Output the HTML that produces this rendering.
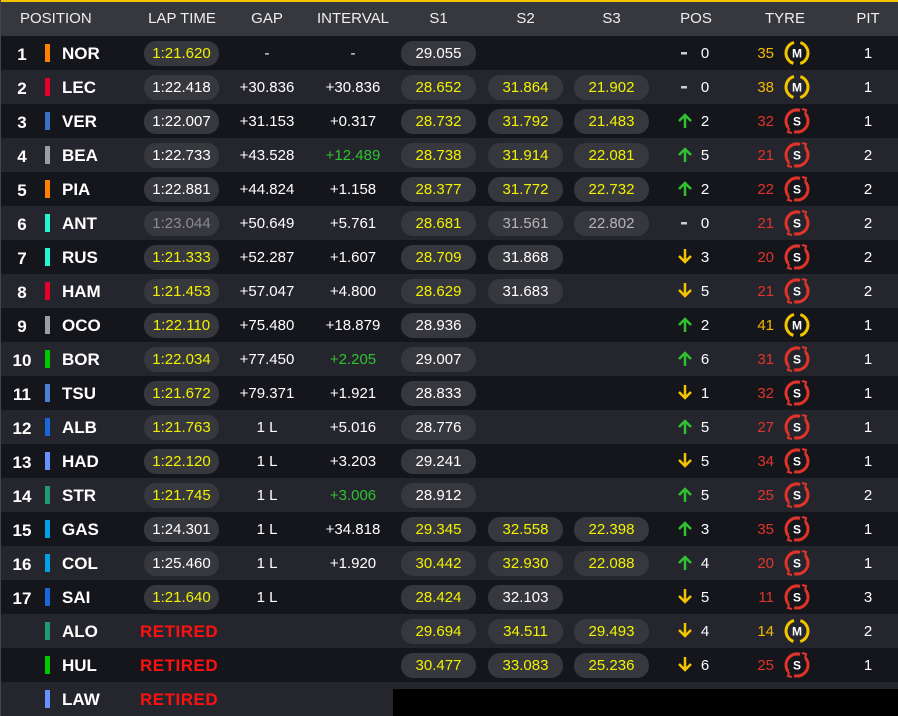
<!DOCTYPE html>
<html><head><meta charset="utf-8"><style>
*{margin:0;padding:0;box-sizing:border-box}
body{width:898px;height:716px;background:#15161c;font-family:"Liberation Sans",sans-serif;color:#fff;overflow:hidden;position:relative}
.top{position:absolute;left:0;top:0;width:898px;height:2px;background:#f5c400}
.hd{position:absolute;left:0;top:2px;width:898px;height:34px;background:#37383d;font-size:15px;color:#eee}
.hd span{position:absolute;top:8px;text-align:center}
.r{position:absolute;left:0;width:898px;height:34px;font-size:15px}
.o{background:#15161c}.e{background:#25262d}
.r>*{position:absolute}
.p{left:0;width:44px;text-align:center;top:9px;font-weight:bold;font-size:17px}
.b{left:45px;top:8px;width:5px;height:18px}
.n{left:62px;top:8px;font-weight:bold;font-size:17px}
.pl{top:5px;height:25px;width:75px;border-radius:12px;background:#37383e;text-align:center;line-height:25px}
.lt{left:144px}.s1{left:401px}.s2{left:488px}.s3{left:574px}
.g{left:222px;width:90px;text-align:center;top:9px}
.i{left:308px;width:90px;text-align:center;top:9px}
.ar{left:677px;top:8px}
.pn{left:698px;top:9px;width:14px;text-align:center}
.tn{left:740px;width:34px;text-align:right;top:9px}
.ti{left:783px;top:3px}
.pit{left:848px;width:40px;text-align:center;top:9px}
.y{color:#f2f200}.w{color:#fff}.gr{color:#b5b5b8}.gn{color:#2fc22f}
.ret{left:140px;top:8px;color:#ff1010;font-weight:bold;font-size:17px;letter-spacing:0.5px}
.tm{color:#f5b800}.ts{color:#e0342a}
</style></head><body>
<div class="top"></div>
<div class="hd">
<span style="left:20px">POSITION</span>
<span style="left:132px;width:100px">LAP TIME</span>
<span style="left:222px;width:90px">GAP</span>
<span style="left:308px;width:90px">INTERVAL</span>
<span style="left:401px;width:75px">S1</span>
<span style="left:488px;width:75px">S2</span>
<span style="left:574px;width:75px">S3</span>
<span style="left:666px;width:60px">POS</span>
<span style="left:750px;width:70px">TYRE</span>
<span style="left:848px;width:40px">PIT</span>
</div>
<svg width="0" height="0" style="position:absolute"><defs>
<g id="M"><circle cx="14" cy="14" r="11" fill="none" stroke="#f5c400" stroke-width="3" stroke-dasharray="27.6 6.95" transform="rotate(-72 14 14)"/><text x="14" y="18.5" text-anchor="middle" font-family="Liberation Sans" font-weight="bold" font-size="12" fill="#fff">M</text></g>
<g id="S"><circle cx="14" cy="14" r="11" fill="none" stroke="#e0342a" stroke-width="3" stroke-dasharray="27.6 6.95" transform="rotate(-40 14 14)"/><path d="M19 2l4 1-1 4M9 26l-4-1 1-4" fill="none" stroke="#e0342a" stroke-width="2"/><text x="14" y="18.5" text-anchor="middle" font-family="Liberation Sans" font-weight="bold" font-size="12" fill="#fff">S</text></g>
<g id="U"><path d="M8 16V3M2 9l6-6 6 6" fill="none" stroke="#2fc22f" stroke-width="2.5"/></g>
<g id="D"><path d="M8 1v13M2 8l6 6 6-6" fill="none" stroke="#f5c400" stroke-width="2.5"/></g>
<g id="Z"><rect x="4" y="8" width="6" height="2.5" fill="#ccc"/></g>
</defs></svg>

<div class="r o" style="top:36px"><span class="p">1</span><span class="b" style="background:#ff8000"></span><span class="n">NOR</span><span class="pl lt y">1:21.620</span><span class="g">-</span><span class="i">-</span><span class="pl s1 w">29.055</span><svg class="ar" width="16" height="18"><use href="#Z"/></svg><span class="pn">0</span><span class="tn tm">35</span><svg class="ti" width="28" height="28"><use href="#M"/></svg><span class="pit">1</span></div>
<div class="r e" style="top:70px"><span class="p">2</span><span class="b" style="background:#e8002d"></span><span class="n">LEC</span><span class="pl lt w">1:22.418</span><span class="g">+30.836</span><span class="i">+30.836</span><span class="pl s1 y">28.652</span><span class="pl s2 y">31.864</span><span class="pl s3 y">21.902</span><svg class="ar" width="16" height="18"><use href="#Z"/></svg><span class="pn">0</span><span class="tn tm">38</span><svg class="ti" width="28" height="28"><use href="#M"/></svg><span class="pit">1</span></div>
<div class="r o" style="top:104px"><span class="p">3</span><span class="b" style="background:#3671c6"></span><span class="n">VER</span><span class="pl lt w">1:22.007</span><span class="g">+31.153</span><span class="i">+0.317</span><span class="pl s1 y">28.732</span><span class="pl s2 y">31.792</span><span class="pl s3 y">21.483</span><svg class="ar" width="16" height="18"><use href="#U"/></svg><span class="pn">2</span><span class="tn ts">32</span><svg class="ti" width="28" height="28"><use href="#S"/></svg><span class="pit">1</span></div>
<div class="r e" style="top:138px"><span class="p">4</span><span class="b" style="background:#9c9fa2"></span><span class="n">BEA</span><span class="pl lt w">1:22.733</span><span class="g">+43.528</span><span class="i gn">+12.489</span><span class="pl s1 y">28.738</span><span class="pl s2 y">31.914</span><span class="pl s3 y">22.081</span><svg class="ar" width="16" height="18"><use href="#U"/></svg><span class="pn">5</span><span class="tn ts">21</span><svg class="ti" width="28" height="28"><use href="#S"/></svg><span class="pit">2</span></div>
<div class="r o" style="top:172px"><span class="p">5</span><span class="b" style="background:#ff8000"></span><span class="n">PIA</span><span class="pl lt w">1:22.881</span><span class="g">+44.824</span><span class="i">+1.158</span><span class="pl s1 y">28.377</span><span class="pl s2 y">31.772</span><span class="pl s3 y">22.732</span><svg class="ar" width="16" height="18"><use href="#U"/></svg><span class="pn">2</span><span class="tn ts">22</span><svg class="ti" width="28" height="28"><use href="#S"/></svg><span class="pit">2</span></div>
<div class="r e" style="top:206px"><span class="p">6</span><span class="b" style="background:#27f4d2"></span><span class="n">ANT</span><span class="pl lt gr" style="color:#8a8a8e">1:23.044</span><span class="g">+50.649</span><span class="i">+5.761</span><span class="pl s1 y">28.681</span><span class="pl s2 gr">31.561</span><span class="pl s3 gr">22.802</span><svg class="ar" width="16" height="18"><use href="#Z"/></svg><span class="pn">0</span><span class="tn ts">21</span><svg class="ti" width="28" height="28"><use href="#S"/></svg><span class="pit">2</span></div>
<div class="r o" style="top:240px"><span class="p">7</span><span class="b" style="background:#27f4d2"></span><span class="n">RUS</span><span class="pl lt y">1:21.333</span><span class="g">+52.287</span><span class="i">+1.607</span><span class="pl s1 y">28.709</span><span class="pl s2 w">31.868</span><svg class="ar" width="16" height="18"><use href="#D"/></svg><span class="pn">3</span><span class="tn ts">20</span><svg class="ti" width="28" height="28"><use href="#S"/></svg><span class="pit">2</span></div>
<div class="r e" style="top:274px"><span class="p">8</span><span class="b" style="background:#e8002d"></span><span class="n">HAM</span><span class="pl lt y">1:21.453</span><span class="g">+57.047</span><span class="i">+4.800</span><span class="pl s1 y">28.629</span><span class="pl s2 w">31.683</span><svg class="ar" width="16" height="18"><use href="#D"/></svg><span class="pn">5</span><span class="tn ts">21</span><svg class="ti" width="28" height="28"><use href="#S"/></svg><span class="pit">2</span></div>
<div class="r o" style="top:308px"><span class="p">9</span><span class="b" style="background:#9c9fa2"></span><span class="n">OCO</span><span class="pl lt y">1:22.110</span><span class="g">+75.480</span><span class="i">+18.879</span><span class="pl s1 w">28.936</span><svg class="ar" width="16" height="18"><use href="#U"/></svg><span class="pn">2</span><span class="tn tm">41</span><svg class="ti" width="28" height="28"><use href="#M"/></svg><span class="pit">1</span></div>
<div class="r e" style="top:342px"><span class="p">10</span><span class="b" style="background:#00c800"></span><span class="n">BOR</span><span class="pl lt y">1:22.034</span><span class="g">+77.450</span><span class="i gn">+2.205</span><span class="pl s1 w">29.007</span><svg class="ar" width="16" height="18"><use href="#U"/></svg><span class="pn">6</span><span class="tn ts">31</span><svg class="ti" width="28" height="28"><use href="#S"/></svg><span class="pit">1</span></div>
<div class="r o" style="top:376px"><span class="p">11</span><span class="b" style="background:#4a7fd6"></span><span class="n">TSU</span><span class="pl lt y">1:21.672</span><span class="g">+79.371</span><span class="i">+1.921</span><span class="pl s1 w">28.833</span><svg class="ar" width="16" height="18"><use href="#D"/></svg><span class="pn">1</span><span class="tn ts">32</span><svg class="ti" width="28" height="28"><use href="#S"/></svg><span class="pit">1</span></div>
<div class="r e" style="top:410px"><span class="p">12</span><span class="b" style="background:#1868db"></span><span class="n">ALB</span><span class="pl lt y">1:21.763</span><span class="g">1 L</span><span class="i">+5.016</span><span class="pl s1 w">28.776</span><svg class="ar" width="16" height="18"><use href="#U"/></svg><span class="pn">5</span><span class="tn ts">27</span><svg class="ti" width="28" height="28"><use href="#S"/></svg><span class="pit">1</span></div>
<div class="r o" style="top:444px"><span class="p">13</span><span class="b" style="background:#6692ff"></span><span class="n">HAD</span><span class="pl lt y">1:22.120</span><span class="g">1 L</span><span class="i">+3.203</span><span class="pl s1 w">29.241</span><svg class="ar" width="16" height="18"><use href="#D"/></svg><span class="pn">5</span><span class="tn ts">34</span><svg class="ti" width="28" height="28"><use href="#S"/></svg><span class="pit">1</span></div>
<div class="r e" style="top:478px"><span class="p">14</span><span class="b" style="background:#229971"></span><span class="n">STR</span><span class="pl lt y">1:21.745</span><span class="g">1 L</span><span class="i gn">+3.006</span><span class="pl s1 w">28.912</span><svg class="ar" width="16" height="18"><use href="#U"/></svg><span class="pn">5</span><span class="tn ts">25</span><svg class="ti" width="28" height="28"><use href="#S"/></svg><span class="pit">2</span></div>
<div class="r o" style="top:512px"><span class="p">15</span><span class="b" style="background:#00a1e8"></span><span class="n">GAS</span><span class="pl lt w">1:24.301</span><span class="g">1 L</span><span class="i">+34.818</span><span class="pl s1 y">29.345</span><span class="pl s2 y">32.558</span><span class="pl s3 y">22.398</span><svg class="ar" width="16" height="18"><use href="#U"/></svg><span class="pn">3</span><span class="tn ts">35</span><svg class="ti" width="28" height="28"><use href="#S"/></svg><span class="pit">1</span></div>
<div class="r e" style="top:546px"><span class="p">16</span><span class="b" style="background:#00a1e8"></span><span class="n">COL</span><span class="pl lt w">1:25.460</span><span class="g">1 L</span><span class="i">+1.920</span><span class="pl s1 y">30.442</span><span class="pl s2 y">32.930</span><span class="pl s3 y">22.088</span><svg class="ar" width="16" height="18"><use href="#U"/></svg><span class="pn">4</span><span class="tn ts">20</span><svg class="ti" width="28" height="28"><use href="#S"/></svg><span class="pit">1</span></div>
<div class="r o" style="top:580px"><span class="p">17</span><span class="b" style="background:#1868db"></span><span class="n">SAI</span><span class="pl lt y">1:21.640</span><span class="g">1 L</span><span class="pl s1 y">28.424</span><span class="pl s2 w">32.103</span><svg class="ar" width="16" height="18"><use href="#D"/></svg><span class="pn">5</span><span class="tn ts">11</span><svg class="ti" width="28" height="28"><use href="#S"/></svg><span class="pit">3</span></div>
<div class="r e" style="top:614px"><span class="b" style="background:#229971"></span><span class="n">ALO</span><span class="ret">RETIRED</span><span class="pl s1 y">29.694</span><span class="pl s2 y">34.511</span><span class="pl s3 y">29.493</span><svg class="ar" width="16" height="18"><use href="#D"/></svg><span class="pn">4</span><span class="tn tm">14</span><svg class="ti" width="28" height="28"><use href="#M"/></svg><span class="pit">2</span></div>
<div class="r o" style="top:648px"><span class="b" style="background:#00c800"></span><span class="n">HUL</span><span class="ret">RETIRED</span><span class="pl s1 y">30.477</span><span class="pl s2 y">33.083</span><span class="pl s3 y">25.236</span><svg class="ar" width="16" height="18"><use href="#D"/></svg><span class="pn">6</span><span class="tn ts">25</span><svg class="ti" width="28" height="28"><use href="#S"/></svg><span class="pit">1</span></div>
<div class="r e" style="top:682px"><span class="b" style="background:#6692ff"></span><span class="n">LAW</span><span class="ret">RETIRED</span></div>
<div style="position:absolute;left:393px;top:689px;width:505px;height:27px;background:#000"></div>
<div style="position:absolute;left:0;top:0;width:1px;height:716px;background:#444"></div>
</body></html>
